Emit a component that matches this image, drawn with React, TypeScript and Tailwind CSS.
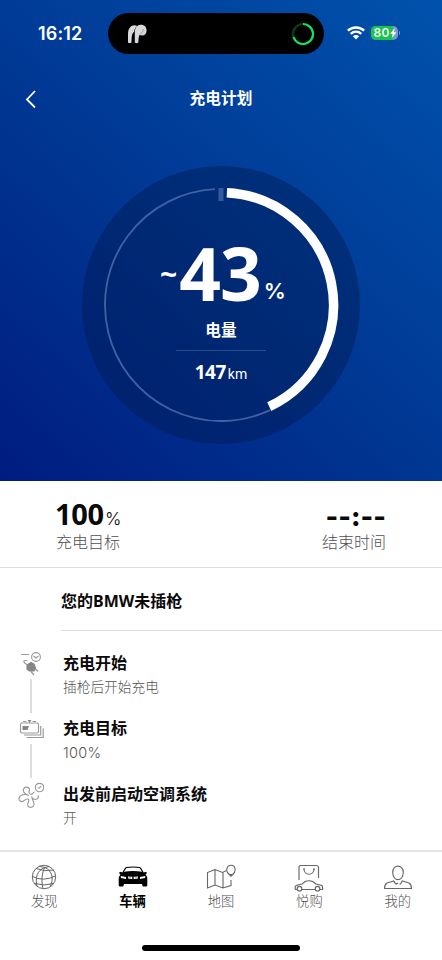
import React from "react";

const CJK = "font-['Noto_Sans','Noto_Sans_CJK_SC',sans-serif]";

function polar(r: number, deg: number) {
  const a = ((deg - 90) * Math.PI) / 180;
  return `${(139 + r * Math.cos(a)).toFixed(2)} ${(139 + r * Math.sin(a)).toFixed(2)}`;
}

function StatusBar() {
  return (
    <div className="flex h-[54px] pt-[13px] font-['Inter',sans-serif] text-white">
      <div className="w-[108px] pl-[38px] pt-[8px] text-[18px] leading-[26px] font-semibold tracking-[0.15px]">16:12</div>
      <div className="flex h-[41px] w-[216px] items-center justify-between rounded-full bg-black pl-[18px] pr-[9px]">
        <svg width="22" height="22" viewBox="0 0 22 22" fill="#d9d9dc">
          <path d="M2 19.500V11C2 5 5 2.200 8.500 2.200Q10 2.200 11 3C8.500 5.500 8.200 8 8 9C6 10 5.700 13 5.500 19.500Q3.800 21 2 19.500Z" />
          <path d="M8.800 19.500V10C8.800 4.500 11 1.700 15 1.700C18.500 1.700 20.600 4 20.600 7.500C20.600 11.500 17.500 13.500 13.500 12C12.500 14 12.500 17 12.300 19.500Q10.500 21 8.800 19.500Z" />
          <path d="M13.500 11.500Q17 10 17.500 6" fill="none" stroke="#88888c" strokeWidth=".7" />
        </svg>
        <svg width="24" height="24" viewBox="0 0 24 24" fill="none" strokeWidth="2.200">
          <circle cx="12" cy="12" r="10" stroke="#06401f" />
          <path d="M12 2A10 10 0 1 1 2.500 15" stroke="#10e468" />
        </svg>
      </div>
      <svg className="ml-[23px] mt-[13px]" width="18" height="14" viewBox="0 0 18 14" fill="none" stroke="white" strokeWidth="2.400">
        <path d="M.8 4.700C5.300.4 12.700.4 17.200 4.700M3.700 7.800C6.800 5 11.200 5 14.300 7.800" />
        <path d="M9 13.500L5.800 10.300Q9 7.700 12.200 10.300Z" fill="white" stroke="none" />
      </svg>
      <div className="relative ml-[6px] mt-[13px] flex h-[14px] w-[27px] items-center overflow-hidden rounded-[5px] bg-[#779bd0]">
        <div className="absolute inset-y-0 left-0 w-[22px] bg-[#16c64c]" />
        <span className="relative pl-[2.500px] text-[12px] leading-[14px] font-semibold tracking-[0.2px]">80</span>
        <svg className="relative" width="7" height="10" viewBox="0 0 8 12" fill="white"><path d="M5.500 0L0 7H3L2 12L7.500 5H4.500Z" /></svg>
      </div>
      <div className="ml-[1px] mt-[18px] h-[4px] w-[1px] rounded-r bg-[#6d93cd]" />
    </div>
  );
}

function Gauge() {
  return (
    <div className="mx-auto grid h-[278px] w-[278px]">
      <svg className="col-start-1 row-start-1" width="278" height="278" viewBox="0 0 278 278" fill="none">
        <circle cx="139" cy="139" r="139" fill="#001a50" fillOpacity=".45" />
        <path d={`M${polar(116, 155)}A116 116 0 1 1 ${polar(116, 357)}`} stroke="#4062a5" strokeWidth="1.800" />
        <path d={`M${polar(112.5, 3)}A112.500 112.500 0 0 1 ${polar(112.5, 154.6)}`} stroke="white" strokeWidth="9.500" />
        <path d="M139 22V35" stroke="#365b9d" strokeWidth="5" />
      </svg>
      <div className={`col-start-1 row-start-1 flex flex-col items-center pt-[78px] text-white ${CJK}`}>
        <div className="flex h-[58px] items-end pl-[4px]">
          <span className="mb-[13px] mr-[2px] h-[30px] text-[30px] leading-[30px] font-bold">~</span>
          <span className="h-[58px] text-[73px] leading-[58px] font-bold tracking-[-1px]">43</span>
          <span className="mb-[-2px] ml-[3px] h-[26px] font-['Inter',sans-serif] text-[22px] leading-[26px] font-semibold">%</span>
        </div>
        <div className="mt-[16px] text-[15.700px] leading-[24px] font-bold">电量</div>
        <div className="mt-[8px] h-px w-[90px] bg-[#294d8c]" />
        <div className="mt-[8px] flex items-baseline leading-[26px]">
          <span className="text-[19px] font-bold tracking-[-0.5px]">147</span>
          <span className="ml-[2px] font-['Roboto',sans-serif] text-[14px]">km</span>
        </div>
      </div>
    </div>
  );
}

function PlugIcon() {
  return (
    <svg width="26" height="26" viewBox="0 0 26 26" fill="none" stroke="#999" strokeWidth="1.100">
      <path d="M3 3.500H11M9.500 9.500H7Q5.500 9.500 6 11Q6.500 12.500 9 13.500M17 17.500L20 20.500M13 20.500L16 24" strokeWidth="1.200" />
      <circle cx="18" cy="6" r="4.400" /><path d="M15.500 5L18 7L20.500 5" />
      <path d="M9 14L13 11.500L16 13L17.500 17L16 20L11.500 20L9 18Z" fill="#858585" stroke="#858585" strokeLinejoin="round" />
    </svg>
  );
}

function BatteryIcon() {
  return (
    <svg width="26" height="26" viewBox="0 0 26 26" fill="none" stroke="#999" strokeWidth="1.150">
      <rect x="2.500" y="7" width="18" height="10" rx="1.500" />
      <path d="M5 5.500H8.500M14.500 5.500H18M22.700 10V19H6M25.200 12.500V21.500H8.500" />
      <path d="M9.500 4H13.500L11.500 7ZM4.500 10H11L9.500 14H4.500Z" fill="#858585" stroke="none" />
    </svg>
  );
}

function FanIcon() {
  return (
    <svg width="26" height="28" viewBox="0 0 26 28" fill="none" stroke="#999" strokeWidth="1.150">
      <path d="M11 13.500C7 12 4.500 10 5.500 7C6.500 4.500 10.500 4.500 11.500 7C12 8.500 10 9.500 11.500 11.500C13.500 14 15 10.500 16.500 10M11 13.500C7 11.500 2 12.500 1 16C.5 18.500 3 20.500 5.500 19C7.500 17.500 9 16 10.500 17.500C12 19.500 8.500 21 10 24C11.500 26.500 15.500 25.500 16 22.500C16.500 20 14 18 14 15.500C16 18.500 19.500 18 20.500 15L20 13.500" />
      <circle cx="21.500" cy="5.500" r="4.200" /><path d="M19.500 6H21.500L23 4" />
    </svg>
  );
}

function TimelineRow({ icon, title, detail, line, latin }: { icon: React.ReactNode; title: string; detail: string; line?: boolean; latin?: boolean }) {
  return (
    <div className="flex h-[65.300px]">
      <div className="flex w-[26px] flex-col items-center">
        <div className="flex h-[28px] items-start">{icon}</div>
        {line && <div className="h-[34px] w-[2px] bg-[#ddd]" />}
      </div>
      <div className="ml-[19px]">
        <div className="text-[16px] leading-[24px] font-bold text-[#0a0a0a]">{title}</div>
        <div className={latin ? "mt-[1px] font-['Inter',sans-serif] text-[14.500px] leading-[24px] font-light tracking-[0.3px] text-[#555]" : "text-[13.700px] leading-[24px] font-light text-[#505050]"}>{detail}</div>
      </div>
    </div>
  );
}

function GlobeIcon() {
  return (
    <svg width="30" height="28" viewBox="0 0 30 28" fill="none" stroke="#666" strokeWidth="1">
      <circle cx="15" cy="13" r="11.700" />
      <path d="M16 3.500C13 7 12 18 14 24.500M16 3.500C8 6 6 14 8 22M16 3.500C23 7 25 14 21.500 22M7 4.500Q15 8 24.500 6M3.500 12.500Q14 18 26.500 12M6 19.500Q15 22.500 24 19.500M10 2.300L16 3.500L20 2.500" />
    </svg>
  );
}

function CarIcon() {
  return (
    <svg width="30" height="28" viewBox="0 0 30 28">
      <path fill="#000" fillRule="evenodd" d="M8 2.900Q15 1.900 22 2.900Q24 4.500 25.700 8.500L28 7.800L29 9L27.500 10.500Q29.300 12 29.300 15.500V21.500L28.500 22.500H24.800L24 20H6L5.200 22.500H1.500L.7 21.500V15.500Q.7 12 2.500 10.500L1 9L2 7.800L4.300 8.500Q6 4.500 8 2.900ZM8.500 4L5.800 7.800Q15 6.300 24.200 7.800L21.500 4Q15 3 8.500 4Z" />
      <path d="M2.700 12L8 13V15L3 14ZM27.300 12L22 13V15L27 14ZM9.800 12.500L14.300 12.800V15H10.700ZM20.200 12.500L15.700 12.800V15H19.300Z" fill="white" />
      <path d="M12 12.500V15M18 12.500V15" stroke="#000" strokeWidth=".5" />
    </svg>
  );
}

function MapIcon() {
  return (
    <svg width="30" height="28" viewBox="0 0 30 28" fill="none" stroke="#666" strokeWidth="1.100">
      <path d="M20.500 6.500L16.500 8.500L9 5.500L1.500 8.500V24L9 21L17 24L25 21.500V16M9 5.500V21M17 8.500V24" />
      <path d="M23.500 10.500C19 8 20.500 1.200 25 1.200C29.700 1.200 30.500 8 26.500 10.500L25 12Z" /><path d="M23.500 10.500H26.500L25 12Z" fill="#666" />
    </svg>
  );
}

function ShopIcon() {
  return (
    <svg width="30" height="28" viewBox="0 0 30 28" fill="none" stroke="#666" strokeWidth="1.150">
      <path d="M5 16V3.500Q5 1.500 7 1.500H22Q24.500 1.500 24.500 3.500V14M10 5C10 12 20 12 20 5M9 5H11M19 5H21" />
      <path d="M3 25.500H1.500Q.5 23.500 2 21.500L8 20L11.500 17.200Q18 15.500 22 20L28 21.500Q29 23.500 28.500 25.500H26M7.500 25.500H21" />
      <circle cx="5.500" cy="24.700" r="2.300" /><circle cx="23.500" cy="24.700" r="2.300" />
    </svg>
  );
}

function PersonIcon() {
  return (
    <svg width="30" height="28" viewBox="0 0 30 28" fill="none" stroke="#666" strokeWidth="1.150">
      <path d="M9.700 8.500C9.700 0 20.300 0 20.300 8.500C20 18 10 18 9.700 8.500ZM10.500 16.500Q12 20 14 20.300M12.500 20.300L15 19M19.500 16.500Q18 20 16.500 20.300M10.500 17L4 19Q1.500 20.500 1.500 24.500H28.500Q28.500 20.500 26 19L19.500 17" />
    </svg>
  );
}

const TABS = [
  { label: "发现", icon: <GlobeIcon /> },
  { label: "车辆", icon: <CarIcon />, active: true },
  { label: "地图", icon: <MapIcon /> },
  { label: "悦购", icon: <ShopIcon /> },
  { label: "我的", icon: <PersonIcon /> },
];

export default function App() {
  return (
    <div className={`flex h-[960px] w-[442px] flex-col overflow-hidden bg-white ${CJK}`}>
      <header className="h-[481px] shrink-0 bg-[linear-gradient(222deg,#0052ac_0%,#003894_52%,#001c80_100%)]">
        <StatusBar />
        <div className="grid h-[112px] grid-cols-3 px-[24px] pt-[32px] text-white">
          <svg className="mt-[3px]" width="14" height="20" viewBox="0 0 14 20" fill="none" stroke="white" strokeWidth="1.800"><path d="M11 2L3 10.500L11 18.500" /></svg>
          <h1 className="text-center text-[15.700px] leading-[24px] font-bold">充电计划</h1>
        </div>
        <Gauge />
      </header>
      <section className="flex h-[87px] shrink-0 justify-between border-b border-[#ddd] px-[56px] pt-[16px]">
        <div>
          <div className="flex h-[32px] items-baseline leading-[34px] text-[#0a0a0a]">
            <span className="-ml-[1px] text-[29px] font-bold tracking-[-0.3px]">100</span><span className="ml-[1px] font-['Inter',sans-serif] text-[17.500px] font-light">%</span>
          </div>
          <div className="mt-[1px] text-[16px] leading-[24px] font-light text-[#505050]">充电目标</div>
        </div>
        <div className="text-right">
          <div className="h-[32px] pt-[4px] font-['Inter',sans-serif] text-[27px] leading-[28px] font-extrabold text-[#0a0a0a]"><span className="block h-[28px] translate-y-[2px]">--:--</span></div>
          <div className="mt-[1px] text-[16px] leading-[24px] font-light text-[#505050]">结束时间</div>
        </div>
      </section>
      <section className="ml-[61px] h-[63px] shrink-0 border-b border-[#ddd] pt-[21px] text-[16px] leading-[24px] font-bold text-[#0a0a0a]">您的BMW未插枪</section>
      <section className="h-[219px] shrink-0 pl-[18px] pt-[20px]">
        <TimelineRow icon={<PlugIcon />} title="充电开始" detail="插枪后开始充电" line />
        <TimelineRow icon={<BatteryIcon />} title="充电目标" detail="100%" line latin />
        <TimelineRow icon={<FanIcon />} title="出发前启动空调系统" detail="开" />
      </section>
      <nav className="grid h-[95px] shrink-0 grid-cols-5 border-t-2 border-[#e5e5e5] pt-[12px]">
        {TABS.map((tab) => (
          <div key={tab.label} className="flex flex-col items-center">
            {tab.icon}
            <span className={tab.active ? "-mt-px text-[13.300px] leading-[20px] font-bold text-black" : "-mt-px text-[13.300px] leading-[20px] font-light text-[#505050]"}>{tab.label}</span>
          </div>
        ))}
      </nav>
      <div className="mx-auto h-[6px] w-[158px] shrink-0 rounded-full bg-black" />
    </div>
  );
}
